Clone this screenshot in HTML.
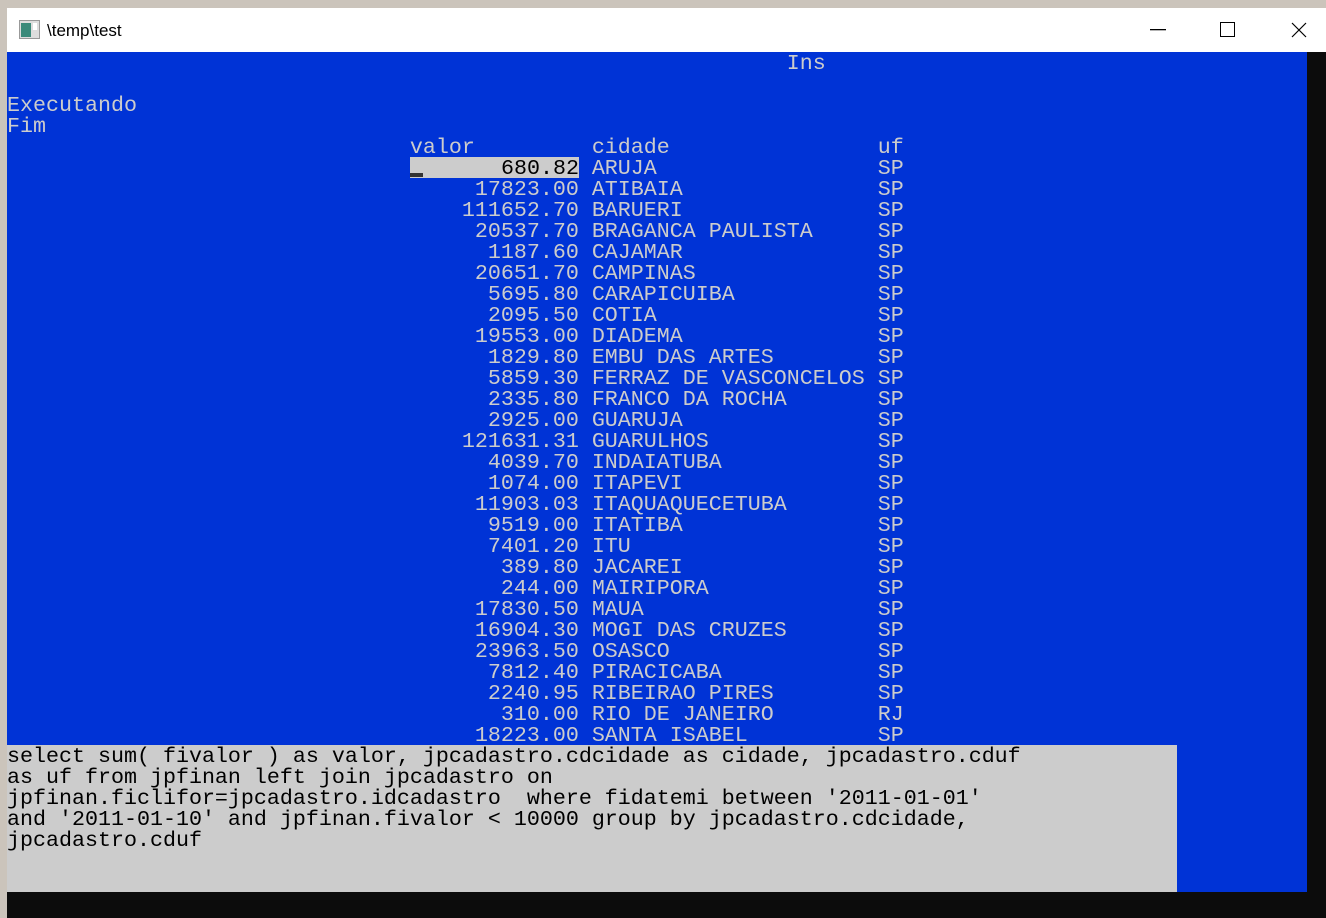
<!DOCTYPE html>
<html><head><meta charset="utf-8"><style>
html,body{margin:0;padding:0;width:1326px;height:918px;overflow:hidden;background:#0c0c0c;}
#frame{position:absolute;left:0;top:0;width:1326px;height:8px;background:#cbc4bb;}
#lb{position:absolute;left:0;top:0;width:7px;height:918px;background:#cbc4bb;}
#title{position:absolute;left:7px;top:8px;width:1319px;height:44px;background:#fff;}
#title .t{position:absolute;left:40px;top:13px;font:17px "Liberation Sans",sans-serif;color:#000;}
#blue{position:absolute;left:7px;top:52px;width:1300px;height:840px;background:#0033d6;}
#gray{position:absolute;left:7px;top:745px;width:1170px;height:147px;background:#cccccc;}
pre{margin:0;position:absolute;left:7px;top:53px;font:21.67px/21px "Liberation Mono",monospace;color:#cccccc;white-space:pre;}
#hl{position:absolute;left:410px;top:157px;width:169px;height:21px;background:#cccccc;}
#cur{position:absolute;left:410px;top:173px;width:13px;height:4px;background:#333;}
#q{color:#000;top:746px;}
</style></head><body>
<div id="frame"></div><div id="lb"></div>
<div id="title">
<svg style="position:absolute;left:12px;top:12px" width="22" height="20"><rect x="0.5" y="0.5" width="20" height="18" fill="#ddd" stroke="#999"/><rect x="2" y="3" width="10" height="14" fill="#3a8a7a"/><rect x="14" y="3" width="4" height="7" fill="#fff"/></svg>
<div class="t">\temp\test</div>
<svg style="position:absolute;left:1143px;top:21px" width="16" height="2"><rect width="16" height="1.3" fill="#000"/></svg>
<svg style="position:absolute;left:1213px;top:14px" width="16" height="16"><rect x="0.5" y="0.5" width="14" height="14" fill="none" stroke="#000"/></svg>
<svg style="position:absolute;left:1284px;top:14px" width="16" height="16"><path d="M1 1L15 15M15 1L1 15" stroke="#000" stroke-width="1.2"/></svg>
</div>
<div id="blue"></div>
<div id="gray"></div>
<div id="hl"></div>
<pre>                                                            Ins

Executando
Fim
                               valor         cidade                uf
                                      680.82 ARUJA                 SP
                                    17823.00 ATIBAIA               SP
                                   111652.70 BARUERI               SP
                                    20537.70 BRAGANCA PAULISTA     SP
                                     1187.60 CAJAMAR               SP
                                    20651.70 CAMPINAS              SP
                                     5695.80 CARAPICUIBA           SP
                                     2095.50 COTIA                 SP
                                    19553.00 DIADEMA               SP
                                     1829.80 EMBU DAS ARTES        SP
                                     5859.30 FERRAZ DE VASCONCELOS SP
                                     2335.80 FRANCO DA ROCHA       SP
                                     2925.00 GUARUJA               SP
                                   121631.31 GUARULHOS             SP
                                     4039.70 INDAIATUBA            SP
                                     1074.00 ITAPEVI               SP
                                    11903.03 ITAQUAQUECETUBA       SP
                                     9519.00 ITATIBA               SP
                                     7401.20 ITU                   SP
                                      389.80 JACAREI               SP
                                      244.00 MAIRIPORA             SP
                                    17830.50 MAUA                  SP
                                    16904.30 MOGI DAS CRUZES       SP
                                    23963.50 OSASCO                SP
                                     7812.40 PIRACICABA            SP
                                     2240.95 RIBEIRAO PIRES        SP
                                      310.00 RIO DE JANEIRO        RJ
                                    18223.00 SANTA ISABEL          SP</pre>
<pre style="top:158px;left:410px;color:#000">       680.82</pre>
<div id="cur"></div>
<pre id="q">select sum( fivalor ) as valor, jpcadastro.cdcidade as cidade, jpcadastro.cduf
as uf from jpfinan left join jpcadastro on
jpfinan.ficlifor=jpcadastro.idcadastro  where fidatemi between '2011-01-01'
and '2011-01-10' and jpfinan.fivalor &lt; 10000 group by jpcadastro.cdcidade,
jpcadastro.cduf</pre>
</body></html>
